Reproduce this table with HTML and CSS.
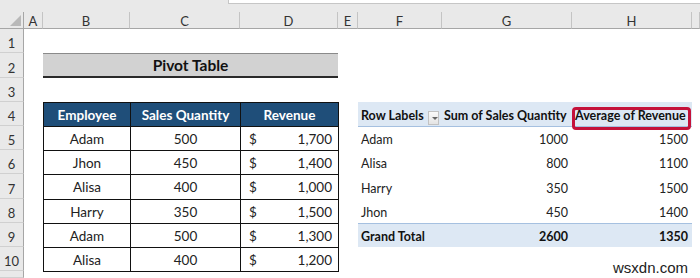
FILE: index.html
```html
<html>
  <head>
    <title>Pivot Table</title>
    <link rel="stylesheet" href="styles.css">
  </head>
  <body>
    <div class="app">
      <div class="formula-strip">
        <div class="formula-box"></div>
      </div>

      <div class="sheet">
        <div class="corner"><span class="corner-mark"></span></div>
        <div class="col-head">A</div>
        <div class="col-head">B</div>
        <div class="col-head">C</div>
        <div class="col-head">D</div>
        <div class="col-head">E</div>
        <div class="col-head">F</div>
        <div class="col-head">G</div>
        <div class="col-head">H</div>
        <div class="col-head"></div>

        <div class="row-head r1">1</div>
        <div class="row-head r2">2</div>
        <div class="row-head r3">3</div>
        <div class="row-head r4">4</div>
        <div class="row-head r5">5</div>
        <div class="row-head r6">6</div>
        <div class="row-head r7">7</div>
        <div class="row-head r8">8</div>
        <div class="row-head r9">9</div>
        <div class="row-head r10">10</div>
        <div class="row-head r11"></div>

        <div class="title">Pivot Table</div>

        <table class="data">
          <colgroup>
            <col class="col-b">
            <col class="col-c">
            <col class="col-d">
          </colgroup>
          <tr>
            <th>Employee</th>
            <th>Sales Quantity</th>
            <th>Revenue</th>
          </tr>
          <tr>
            <td>Adam</td>
            <td>500</td>
            <td class="money"><span>$</span><span>1,700</span></td>
          </tr>
          <tr>
            <td>Jhon</td>
            <td>450</td>
            <td class="money"><span>$</span><span>1,400</span></td>
          </tr>
          <tr class="tall">
            <td>Alisa</td>
            <td>400</td>
            <td class="money"><span>$</span><span>1,000</span></td>
          </tr>
          <tr>
            <td>Harry</td>
            <td>350</td>
            <td class="money"><span>$</span><span>1,500</span></td>
          </tr>
          <tr>
            <td>Adam</td>
            <td>500</td>
            <td class="money"><span>$</span><span>1,300</span></td>
          </tr>
          <tr>
            <td>Alisa</td>
            <td>400</td>
            <td class="money"><span>$</span><span>1,200</span></td>
          </tr>
        </table>

        <table class="pivot">
          <colgroup>
            <col class="col-f">
            <col class="col-g">
            <col class="col-h">
          </colgroup>
          <tr class="pivot-head">
            <th>
              <span class="label-cell">Row Labels <span class="filter-btn"></span></span>
            </th>
            <th>Sum of Sales Quantity</th>
            <th class="marked">Average of Revenue<span class="mark-box"></span></th>
          </tr>
          <tr>
            <td>Adam</td>
            <td class="num">1000</td>
            <td class="num">1500</td>
          </tr>
          <tr>
            <td>Alisa</td>
            <td class="num">800</td>
            <td class="num">1100</td>
          </tr>
          <tr class="tall">
            <td>Harry</td>
            <td class="num">350</td>
            <td class="num">1500</td>
          </tr>
          <tr>
            <td>Jhon</td>
            <td class="num">450</td>
            <td class="num">1400</td>
          </tr>
          <tr class="pivot-total">
            <td>Grand Total</td>
            <td class="num">2600</td>
            <td class="num">1350</td>
          </tr>
        </table>
      </div>

      <div class="watermark">wsxdn.com</div>
    </div>
  </body>
</html>
```

FILE: styles.css
```css
html,
body {
  padding: 0;
  margin: 0;
  background: #fff;
  font-family: Lato, "Noto Sans", sans-serif;
  color: #222;
}

.app {
  position: relative;
  width: 700px;
  height: 278px;
  overflow: hidden;
}

/* formula bar remnant */
.formula-strip {
  height: 12px;
  background: #e9e9e9;
  display: flex;
  justify-content: flex-end;
}

.formula-box {
  width: 471px;
  height: 3px;
  background: #fff;
  border-left: 1px solid #c6c6c6;
  border-bottom: 1px solid #c6c6c6;
}

/* sheet grid */
.sheet {
  display: grid;
  grid-template-columns: 24px 19px 87px 110px 98px 20px 84px 130px 120px 1fr;
  grid-template-rows: 17px 24px 25px 24px 24px 24px 24px 25px 24px 24px 24px 1fr;
  height: 266px;
}

.corner {
  background: #e9e9e9;
  border-right: 1px solid #a6a6a6;
  border-bottom: 1px solid #a6a6a6;
  box-sizing: border-box;
  display: flex;
  justify-content: flex-end;
  align-items: flex-end;
  padding: 0 2px 2px 0;
}

.corner-mark {
  width: 0;
  height: 0;
  border-left: 11px solid transparent;
  border-bottom: 11px solid #b9b9b9;
}

.col-head {
  background: #e9e9e9;
  border-right: 1px solid #c4c4c4;
  border-bottom: 1px solid #a6a6a6;
  box-sizing: border-box;
  display: flex;
  justify-content: center;
  align-items: center;
  font-size: 13px;
  color: #333;
  padding-top: 1px;
}

.row-head {
  grid-column: 1;
  background: #e9e9e9;
  border-right: 1px solid #a6a6a6;
  border-bottom: 1px solid #d0d0d0;
  box-sizing: border-box;
  display: flex;
  justify-content: center;
  align-items: flex-end;
  padding-bottom: 1px;
  font-size: 13px;
  color: #333;
}

.r1 { grid-row: 2; }
.r2 { grid-row: 3; }
.r3 { grid-row: 4; }
.r4 { grid-row: 5; }
.r5 { grid-row: 6; }
.r6 { grid-row: 7; }
.r7 { grid-row: 8; }
.r8 { grid-row: 9; }
.r9 { grid-row: 10; }
.r10 { grid-row: 11; }
.r11 { grid-row: 12; }

/* title block */
.title {
  grid-column: 3 / 6;
  grid-row: 3;
  background: #d2d2d2;
  border-top: 1px solid #8a8a8a;
  border-bottom: 2px solid #2a2a2a;
  box-sizing: border-box;
  display: flex;
  justify-content: center;
  align-items: center;
  font-weight: bold;
  font-size: 15.5px;
  color: #111;
}

/* source table */
.data {
  grid-column: 3 / 6;
  grid-row: 5 / 12;
  border-collapse: collapse;
  width: 295px;
  table-layout: fixed;
  font-size: 13.5px;
}

.data tr {
  height: 24px;
}

.data tr.tall {
  height: 25px;
}

.data .col-b { width: 87px; }
.data .col-c { width: 110px; }
.data .col-d { width: 98px; }

.data th,
.data td {
  border: 1px solid #111;
  padding: 0;
  text-align: center;
  vertical-align: middle;
}

.data th {
  background: #1f4e79;
  color: #fff;
  font-weight: bold;
}

.data td {
  color: #222;
}

.data td.money {
  padding: 0 6px 0 8px;
}

.money span:first-child {
  float: left;
}

.money span:last-child {
  float: right;
}

/* pivot table */
.pivot {
  grid-column: 7 / 10;
  grid-row: 5 / 11;
  border-collapse: collapse;
  width: 334px;
  table-layout: fixed;
  font-size: 12.5px;
}

.pivot .col-f { width: 84px; }
.pivot .col-g { width: 130px; }
.pivot .col-h { width: 120px; }

.pivot tr {
  height: 24px;
}

.pivot tr.tall {
  height: 25px;
}

.pivot th,
.pivot td {
  padding: 0 3px 3px 3px;
  text-align: left;
  vertical-align: bottom;
  white-space: nowrap;
  color: #222;
}

.pivot th {
  font-weight: bold;
  color: #111;
}

.pivot-head {
  background: #dde8f4;
  border-bottom: 1px solid #a5c0e0;
}

.pivot-head th:nth-child(2) {
  padding-left: 2px;
}

.label-cell {
  display: flex;
  align-items: flex-end;
  gap: 4px;
}

.filter-btn {
  position: relative;
  width: 13px;
  height: 14px;
  margin-bottom: -2px;
  background: linear-gradient(#fafafa, #e4e4e4);
  border: 1px solid #c2c2c2;
  box-sizing: border-box;
}

.filter-btn::after {
  content: "";
  position: absolute;
  left: 3px;
  top: 5px;
  border-left: 3px solid transparent;
  border-right: 3px solid transparent;
  border-top: 3px solid #666;
}

.marked {
  position: relative;
}

.mark-box {
  position: absolute;
  left: 0;
  right: 1px;
  top: 5px;
  bottom: -4px;
  border: 3px solid #c4123a;
  border-radius: 4px;
}

.pivot td.num {
  text-align: right;
  padding-right: 4px;
}

.pivot-total {
  background: #dde8f4;
  border-top: 1px solid #a5c0e0;
}

.pivot-total td {
  font-weight: bold;
  color: #111;
}

.watermark {
  position: absolute;
  right: 12px;
  top: 259px;
  font-family: "Liberation Sans Narrow", "Liberation Sans", sans-serif;
  font-size: 15px;
  color: #222;
}
```
